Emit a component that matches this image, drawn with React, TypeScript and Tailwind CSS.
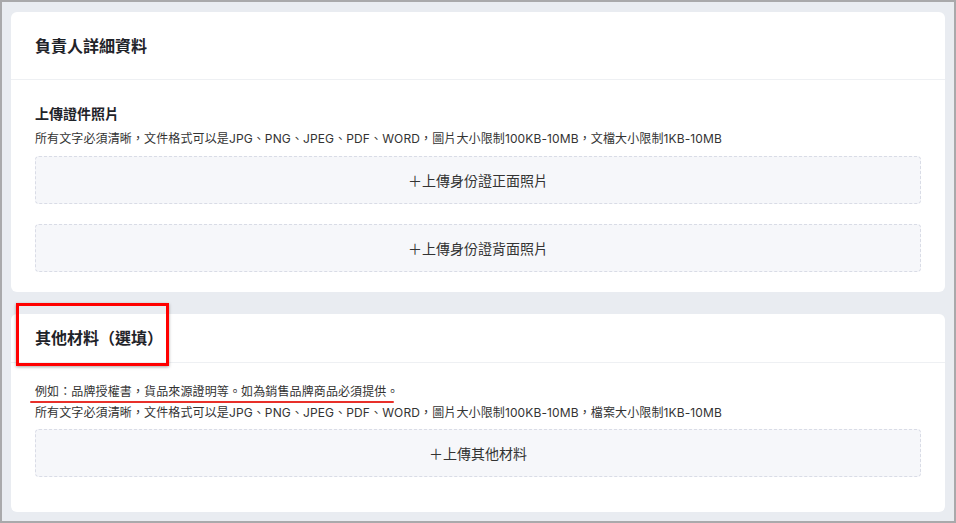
const font = { fontFamily: 'Inter, "Noto Sans CJK TC", "Noto Sans", sans-serif' };

function UploadBox({ label }: { label: string }) {
  return (
    <div className="h-[48px] rounded-[4px] border border-dashed border-[#d9dce6] bg-[#f6f7fa] flex items-center justify-center text-[14px] text-[#333]">
      {label}
    </div>
  );
}

export default function App() {
  return (
    <div
      className="w-[956px] h-[523px] border-2 border-[#a9a9ab] bg-[#e9ecf1] px-[9px] pt-[10px] flex flex-col gap-[22px] overflow-hidden"
      style={font}
    >
      {/* Card 1 */}
      <div className="bg-white rounded-[6px] w-[934px]">
        <div className="h-[68px] flex items-center px-[24px] border-b border-[#eef0f3]">
          <h2 className="text-[16px] font-bold text-[#1f2329]">負責人詳細資料</h2>
        </div>
        <div className="px-[24px] pt-[24px] pb-[20px]">
          <div className="text-[14px] leading-[20px] font-bold text-[#1f2329]">上傳證件照片</div>
          <div className="text-[12px] leading-[18px] mt-[6px] text-[#333] tracking-[0.12px]">
            所有文字必須清晰，文件格式可以是JPG、PNG、JPEG、PDF、WORD，圖片大小限制100KB-10MB，文檔大小限制1KB-10MB
          </div>
          <div className="mt-[8px] flex flex-col gap-[20px]">
            <UploadBox label="＋上傳身份證正面照片" />
            <UploadBox label="＋上傳身份證背面照片" />
          </div>
        </div>
      </div>

      {/* Card 2 */}
      <div className="relative bg-white rounded-[6px] w-[934px] h-[198px]">
        <div className="h-[49px] flex items-center px-[24px] border-b border-[#eef0f3]">
          <h2 className="text-[16px] font-bold text-[#1f2329]">其他材料（選填）</h2>
        </div>
        <div className="px-[24px] pt-[18px] pb-[37px]">
          <div className="text-[12px] leading-[21px] text-[#333] tracking-[0.12px]">
            <div>例如：品牌授權書，貨品來源證明等。如為銷售品牌商品必須提供。</div>
            <div>所有文字必須清晰，文件格式可以是JPG、PNG、JPEG、PDF、WORD，圖片大小限制100KB-10MB，檔案大小限制1KB-10MB</div>
          </div>
          <div className="mt-[6px]">
            <UploadBox label="＋上傳其他材料" />
          </div>
        </div>

        {/* annotations */}
        <div className="absolute left-[5px] top-[-11px] w-[153px] h-[63px] border-[3px] border-[#ff0000] shadow-[0_1px_3px_rgba(0,0,0,0.35)]" />
        <div className="absolute left-[19px] top-[87px] w-[364px] h-[2px] bg-[#e8302a] rounded-full" />
      </div>
    </div>
  );
}
